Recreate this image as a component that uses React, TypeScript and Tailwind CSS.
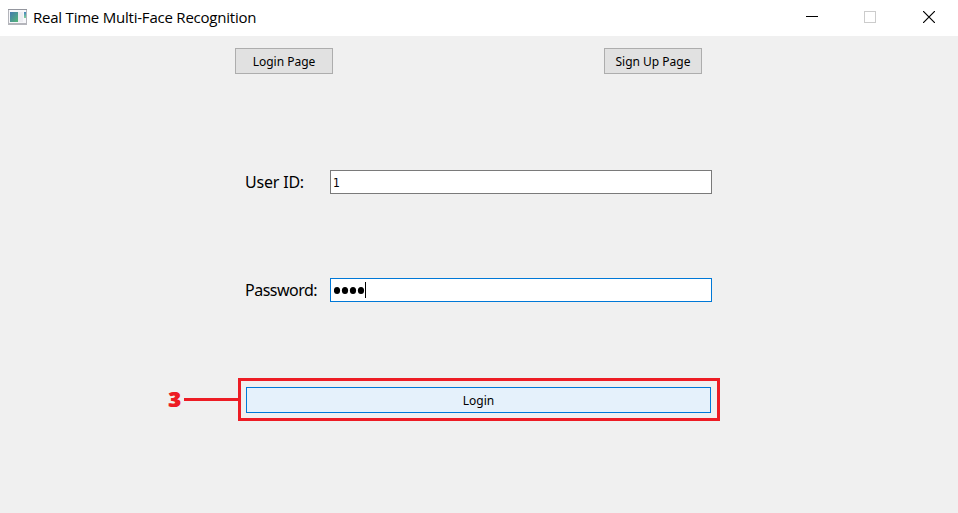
import React from 'react';

const noto = "font-['Noto_Sans','DejaVu_Sans',sans-serif]";

function WindowIcon() {
  return (
    <svg width="19" height="16" viewBox="0 0 19 16" shapeRendering="crispEdges">
      <defs>
        <linearGradient id="pane" x1="0" y1="0" x2="1" y2="1">
          <stop offset="0" stopColor="#4379b0" />
          <stop offset="1" stopColor="#55b676" />
        </linearGradient>
        <linearGradient id="bar" x1="0" y1="0" x2="0" y2="1">
          <stop offset="0" stopColor="#4383bd" />
          <stop offset="1" stopColor="#7fd39a" />
        </linearGradient>
      </defs>
      <rect x="0" y="0" width="19" height="16" fill="#b4b5bb" />
      <rect x="0" y="0" width="19" height="1" fill="#94969e" />
      <rect x="1" y="1" width="17" height="13" fill="#f7f7fa" />
      <rect x="2" y="3" width="8" height="10" fill="url(#pane)" />
      <rect x="10" y="3" width="5" height="10" fill="#ececf1" />
      <rect x="16" y="3" width="2" height="6" fill="url(#bar)" />
    </svg>
  );
}

function TitleBar() {
  return (
    <header className="flex h-9 items-center bg-white pb-0.5 pl-2">
      <div className="h-4 w-[19px]">
        <WindowIcon />
      </div>
      <h1 className="ml-1.5 w-[240px] whitespace-nowrap font-['Open_Sans','Noto_Sans',sans-serif] text-[15px] leading-5 tracking-[-0.22px] text-black">
        Real Time Multi-Face Recognition
      </h1>
      <div className="ml-auto mr-[23px] flex items-center">
        <svg className="mr-[46px]" width="12" height="12" viewBox="0 0 12 12" shapeRendering="crispEdges">
          <path d="M0 5.5H12" stroke="#000" />
        </svg>
        <svg className="mr-[47px]" width="12" height="12" viewBox="0 0 12 12" shapeRendering="crispEdges">
          <rect x=".5" y=".5" width="11" height="11" fill="none" stroke="#ccc" />
        </svg>
        <svg width="12" height="12" viewBox="0 0 12 12">
          <path d="M0 0L12 12M12 0L0 12" stroke="#000" strokeWidth="1.2" />
        </svg>
      </div>
    </header>
  );
}

function PageButton({ children }: { children: React.ReactNode }) {
  return (
    <button className={`${noto} flex h-[26px] w-[98px] items-center justify-center whitespace-nowrap border border-[#adadad] bg-[#e1e1e1] pt-0.5 text-[12px] leading-4 text-black`}>
      {children}
    </button>
  );
}

export default function App() {
  return (
    <div className="flex h-[513px] w-[958px] flex-col overflow-hidden bg-[#f0f0f0] text-black">
      <TitleBar />
      <main className="flex flex-col">
        <nav className="ml-[235px] mt-3 flex w-[467px] justify-between">
          <PageButton>Login Page</PageButton>
          <PageButton>Sign Up Page</PageButton>
        </nav>

        <div className="ml-[245px] mt-24 flex h-6 items-center">
          <label className={`${noto} w-[85px] whitespace-nowrap text-[16px] leading-6 tracking-[-0.2px]`}>User ID:</label>
          <div className="flex h-6 w-[382px] items-center border border-[#7a7a7a] bg-white pl-[2px] pt-0.5 font-['DejaVu_Sans_Condensed','DejaVu_Sans',sans-serif] text-[12px] leading-4">
            1
          </div>
        </div>

        <div className="ml-[245px] mt-[84px] flex h-6 items-center">
          <label className={`${noto} w-[85px] whitespace-nowrap text-[16px] leading-6 tracking-[-0.5px]`}>Password:</label>
          <div className="flex h-6 w-[382px] items-center border border-[#0078d7] bg-white pl-[3px]">
            <svg className="mt-px" width="31" height="7" viewBox="0 0 31 7">
              <ellipse cx="3" cy="3.5" rx="3.1" ry="3.5" />
              <ellipse cx="11" cy="3.5" rx="3.1" ry="3.5" />
              <ellipse cx="19" cy="3.5" rx="3.1" ry="3.5" />
              <ellipse cx="27" cy="3.5" rx="3.1" ry="3.5" />
            </svg>
            <div className="h-4 w-px bg-black" />
          </div>
        </div>

        <div className="ml-[168px] mt-[76px] flex h-[43px] items-center">
          <span className="w-4 pb-0.5 font-['Open_Sans','Noto_Sans',sans-serif] text-[21px] font-extrabold leading-6 text-[#ed1c24] [text-shadow:1px_0_0_#ed1c24]">3</span>
          <div className="h-[3px] w-[54px] bg-[#ed1c24]" />
          <div className="h-[43px] w-[482px] border-[3px] border-[#ed1c24] pl-[5px] pt-[6px]">
            <button className={`${noto} flex h-[26px] w-[465px] items-center justify-center border border-[#0078d7] bg-[#e5f1fb] pt-0.5 text-[12px] leading-4`}>
              Login
            </button>
          </div>
        </div>
      </main>
    </div>
  );
}
